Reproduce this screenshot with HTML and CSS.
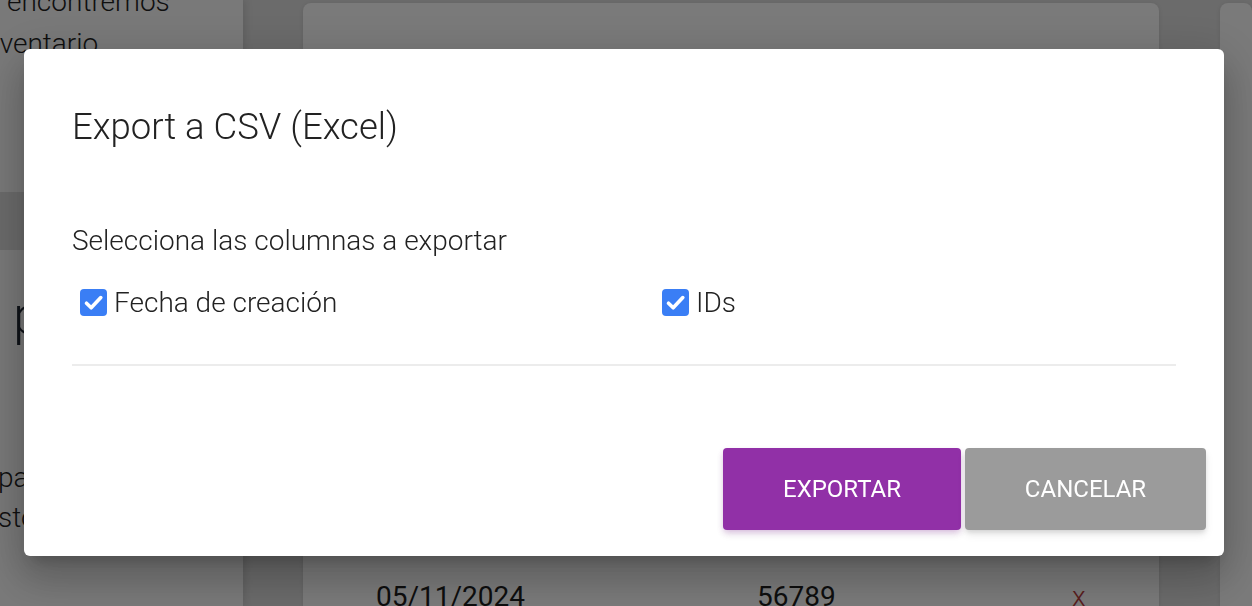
FILE: index.html
```html
<!DOCTYPE html>
<html lang="es">
<head>
<meta charset="utf-8">
<title>Export a CSV</title>
<link rel="stylesheet" href="styles.css">
</head>
<body>
<div class="page">
  <aside class="side">
    <div class="side-top">
      <p class="side-text"><span class="l1">encontremos</span><span class="l2">inventario</span></p>
    </div>
    <div class="side-bottom">
      <h2 class="side-heading">pedidos</h2>
      <p class="side-copy"><span class="l3">para</span><span class="l3">stock</span></p>
    </div>
  </aside>
  <main class="main">
    <section class="card">
      <div class="card-head"></div>
      <div class="row">
        <span class="cell c-date">05/11/2024</span>
        <span class="cell c-id">56789</span>
        <span class="cell c-x">x</span>
      </div>
    </section>
    <section class="card card2"></section>
  </main>
</div>

<div class="overlay"></div>

<div class="modal" role="dialog">
  <h1 class="modal-title">Export a CSV (Excel)</h1>
  <div class="modal-body">
    <p class="hint">Selecciona las columnas a exportar</p>
    <div class="checks">
      <label class="check">
        <span class="box"><svg viewBox="0 0 27 27" width="27" height="27"><path d="M6.5 14.2 L11.2 18.8 L20.8 8.6" fill="none" stroke="#fff" stroke-width="3.6" stroke-linecap="round" stroke-linejoin="round"/></svg></span>
        <span class="check-label">Fecha de creación</span>
      </label>
      <label class="check">
        <span class="box"><svg viewBox="0 0 27 27" width="27" height="27"><path d="M6.5 14.2 L11.2 18.8 L20.8 8.6" fill="none" stroke="#fff" stroke-width="3.6" stroke-linecap="round" stroke-linejoin="round"/></svg></span>
        <span class="check-label">IDs</span>
      </label>
    </div>
    <hr class="divider">
  </div>
  <div class="modal-actions">
    <button class="btn btn-primary">Exportar</button>
    <button class="btn btn-secondary">Cancelar</button>
  </div>
</div>
</body>
</html>
```

FILE: styles.css
```css
* { box-sizing: border-box; }
html, body { margin: 0; padding: 0; }
body {
  width: 1252px;
  height: 606px;
  overflow: hidden;
  font-family: Roboto, "Liberation Sans", sans-serif;
  background: #d8d8d8;
}

/* ---------- background page ---------- */
.page {
  display: flex;
  height: 606px;
  overflow: hidden;
  background: #d6d6d6;
}
.side {
  width: 243px;
  flex: none;
  display: flex;
  flex-direction: column;
  gap: 58px;
  box-shadow: 2px 0 8px rgba(0,0,0,0.12);
}
.side-top, .side-bottom {
  background: #f2f2f2;
  overflow: hidden;
}
.side-top { height: 192px; }
.side-bottom { flex: 1; }
.side-text {
  margin: -19px 0 0 0;
  font-size: 28px;
  font-weight: 300;
  line-height: 42px;
  color: #1e1e1e;
}
.side-text span { display: block; white-space: nowrap; }
.side-text .l1 { padding-left: 7px; }
.side-text .l2 { margin-left: -22px; }
.side-heading {
  margin: 36px 0 0 13px;
  font-size: 54px;
  font-weight: 300;
  line-height: 60px;
  color: #1e2530;
  white-space: nowrap;
}
.side-copy {
  margin: 112px 0 0 0;
  font-size: 28px;
  font-weight: 300;
  line-height: 40px;
  color: #1e1e1e;
}
.side-copy span { display: block; white-space: nowrap; margin-left: -2px; }

.main {
  flex: 1;
  display: flex;
  gap: 61px;
  padding: 3px 0 0 60px;
}
.card {
  width: 856px;
  flex: none;
  background: #f4f4f4;
  border-radius: 8px 8px 0 0;
  display: flex;
  flex-direction: column;
  overflow: hidden;
  box-shadow: 0 1px 4px rgba(0,0,0,0.1);
}
.card2 { width: auto; flex: 1; }
.card-head { height: 577px; flex: none; }
.row {
  display: flex;
  flex: none;
  padding-left: 73px;
  font-size: 28px;
  color: #1c1c1c;
  line-height: 34px;
}
.cell { display: block; }
.c-date { width: 381px; }
.c-id { width: 315px; }
.c-x { color: #b23a3a; font-size: 28px; font-weight: 300; }

/* ---------- overlay ---------- */
.overlay {
  position: fixed;
  inset: 0;
  background: rgba(0,0,0,0.5);
}

/* ---------- modal ---------- */
.modal {
  position: fixed;
  left: 24px;
  top: 49px;
  width: 1200px;
  height: 507px;
  background: #fff;
  border-radius: 6px;
  box-shadow: 0 11px 15px -7px rgba(0,0,0,0.2), 0 24px 38px 3px rgba(0,0,0,0.14), 0 9px 46px 8px rgba(0,0,0,0.12);
  padding: 58px 0 26px 0;
  display: flex;
  flex-direction: column;
}
.modal-title {
  margin: 0 48px;
  font-size: 36.5px;
  font-weight: 300;
  line-height: 40px;
  color: #222;
}
.modal-body {
  padding: 0 48px;
}
.hint {
  margin: 78px 0 0 0;
  font-size: 28px;
  font-weight: 300;
  line-height: 32px;
  color: #222;
}
.checks {
  margin-top: 25px;
  display: grid;
  grid-template-columns: 582px 1fr;
}
.check {
  display: flex;
  align-items: center;
  gap: 7px;
  height: 40px;
  padding-left: 8px;
  font-size: 28px;
  font-weight: 300;
  color: #222;
}
.box {
  width: 27px;
  height: 27px;
  border-radius: 4px;
  background: #3a7ef5;
  display: block;
  flex: none;
}
.box svg { display: block; }
.divider {
  margin: 42px 0 0 0;
  border: 0;
  height: 2px;
  background: #ececec;
}
.modal-actions {
  margin-top: auto;
  display: flex;
  justify-content: flex-end;
  gap: 4px;
  padding-right: 18px;
}
.btn {
  height: 82px;
  border: 0;
  border-radius: 4px;
  font-family: Roboto, "Liberation Sans", sans-serif;
  font-size: 24px;
  font-weight: 400;
  text-transform: uppercase;
  color: #fff;
  box-shadow: 0 3px 5px -1px rgba(0,0,0,0.12), 0 5px 8px 0 rgba(0,0,0,0.08);
}
.btn-primary { width: 238px; background: #9130a7; box-shadow: 0 3px 6px -1px rgba(145,48,167,0.3), 0 5px 8px 0 rgba(0,0,0,0.06); }
.btn-secondary { width: 241px; background: #9b9b9b; }
```
